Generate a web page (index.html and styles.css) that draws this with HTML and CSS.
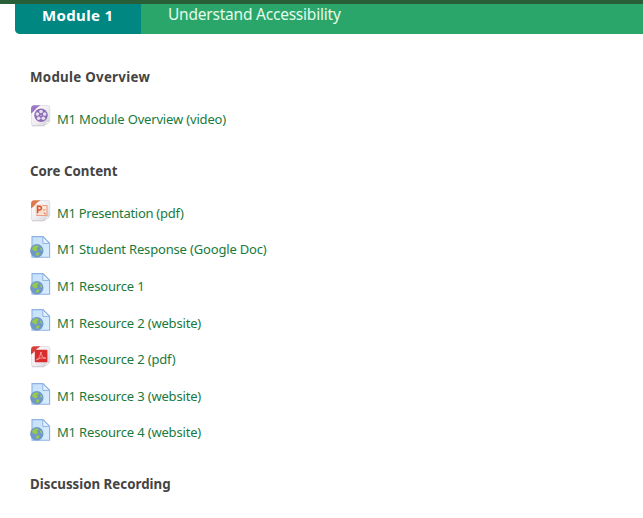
FILE: index.html
```html
<!DOCTYPE html>
<html lang="en">
<head>
<meta charset="utf-8">
<title>Module 1</title>
<link rel="stylesheet" href="styles.css">
</head>
<body>
<svg class="defs" aria-hidden="true">
  <defs>
    <linearGradient id="paper" x2="1" y2="1"><stop stop-color="#fff"/><stop offset=".6" stop-color="#eeebf0"/><stop offset="1" stop-color="#cfcdd2"/></linearGradient>
    <linearGradient id="sheet" x2="1" y2="1"><stop stop-color="#c5e0fa"/><stop offset="1" stop-color="#d8edff"/></linearGradient>
    <symbol id="file" viewBox="0 0 21 22">
      <path d="M8 .5H18Q19.8.5 19.8 2.5V15L14 20.5H3Q1.5 20.5 1.5 19V8Z" fill="url(#paper)" stroke="#dedce2" stroke-width=".8"/>
      <path d="M14 20.5Q15 16 19.8 15.5Q19 18.5 14 20.5Z" fill="#fafafa" stroke="#bfbdc3" stroke-width=".6"/>
      <path d="M2 20.8H14" stroke="#c6c4ca" stroke-width=".8"/>
      <path d="M1 8.5V4Q1 .3 4 .3H10.5Q7 2.5 5 5Q3 7.2 1 8.5Z" fill="currentColor"/>
    </symbol>
    <symbol id="video" viewBox="0 0 21 22">
      <use href="#file"/>
      <circle cx="11" cy="10.3" r="6.7" fill="#8a6db3"/>
      <g fill="#e6def0"><circle cx="11" cy="6.5" r="1.8"/><circle cx="14.6" cy="9.1" r="1.8"/><circle cx="13.3" cy="13.3" r="1.8"/><circle cx="8.7" cy="13.3" r="1.8"/><circle cx="7.4" cy="9.1" r="1.8"/><circle cx="11" cy="10.4" r=".6"/></g>
    </symbol>
    <symbol id="slides" viewBox="0 0 21 22">
      <use href="#file"/>
      <path d="M10 5.5H17V15.5H7V13" fill="#fbe5da" stroke="#e9a17f" stroke-width="1.1"/>
      <path d="M5.5 4.5H12.5V13.5H5.5Z" fill="#f7d8ca"/>
      <path d="M7.6 13V6.2H9.3Q11.4 6.2 11.4 8.1T9.3 10H7.6" fill="none" stroke="#d5532b" stroke-width="1.5"/>
      <path d="M13 10H15.5M14 12.3A2 2 0 0 0 16 14" fill="none" stroke="#e68a68" stroke-width="1.2"/>
    </symbol>
    <symbol id="pdf" viewBox="0 0 21 22">
      <use href="#file"/>
      <rect x="4.8" y="3.8" width="12.6" height="12.4" rx="1" fill="#db2c2c"/>
      <path d="M6.5 14Q10.5 11.5 11 6Q11.2 11.5 15.7 12.2Q10.5 10.8 6.5 14Z" fill="none" stroke="#f5aaa6" stroke-width=".9"/>
    </symbol>
    <symbol id="web" viewBox="0 0 21 22">
      <path d="M2 .6H13L19.6 7.2V21.2H2Z" fill="url(#sheet)" stroke="#8fb2e4" stroke-width="1.1"/>
      <path d="M12.8.8V7.4H19.4Z" fill="#e6f3ff" stroke="#8fb2e4" stroke-width="1"/>
      <circle cx="6.8" cy="14.8" r="6.7" fill="#6f97ca"/>
      <path d="M2.5 11.5Q4.5 9 7.4 9.2L8.8 10.8L6.8 12.2L7.7 14L5.8 15.4L3.5 14.6L2 13.2ZM9.8 11.2L12 12.6L12.3 15L10.6 14.2ZM6.8 16.2L9.6 16.8L8.9 19L6.9 20.2L5.9 18.5Z" fill="#96c94d"/>
    </symbol>
  </defs>
</svg>
<header class="topline"></header>
<div class="tabs">
  <div class="tab">Module 1</div>
  <div class="tab-title">Understand Accessibility</div>
</div>
<main class="content">
  <h2 class="overview">Module Overview</h2>
  <ul>
    <li><svg class="icon purple"><use href="#video"/></svg><a>M1 Module Overview (video)</a></li>
  </ul>
  <h2>Core Content</h2>
  <ul>
    <li><svg class="icon orange"><use href="#slides"/></svg><a class="presentation">M1 Presentation (pdf)</a></li>
    <li><svg class="icon"><use href="#web"/></svg><a>M1 Student Response (Google Doc)</a></li>
    <li><svg class="icon"><use href="#web"/></svg><a>M1 Resource 1</a></li>
    <li><svg class="icon"><use href="#web"/></svg><a>M1 Resource 2 (website)</a></li>
    <li><svg class="icon red"><use href="#pdf"/></svg><a>M1 Resource 2 (pdf)</a></li>
    <li><svg class="icon"><use href="#web"/></svg><a>M1 Resource 3 (website)</a></li>
    <li><svg class="icon"><use href="#web"/></svg><a>M1 Resource 4 (website)</a></li>
  </ul>
  <h2>Discussion Recording</h2>
</main>
</body>
</html>
```
FILE: styles.css
```css
body { margin: 0; background: #fff; font-family: "Noto Sans", "Open Sans", sans-serif; overflow: hidden; }
.defs { display: block; width: 0; height: 0; }
.topline { height: 4px; background: #285f38; }
.tabs { display: flex; height: 30px; margin-left: 15px; background: #2ba66a; border-bottom-left-radius: 5px; overflow: hidden; color: #fff; line-height: 22px; white-space: nowrap; }
.tab { box-sizing: border-box; width: 126px; padding-left: 27px; background: #008782; font-size: 15px; font-weight: 700; letter-spacing: .35px; }
.tab-title { padding-left: 27px; font-size: 15.5px; line-height: 21px; letter-spacing: -.22px; color: #e2fbec; }
.content { padding: 33px 30px 0; }
h2 { margin: 0; height: 20px; line-height: 20px; font-size: 13.3px; font-weight: 700; letter-spacing: 0; color: #444; white-space: nowrap; }
.overview { letter-spacing: .28px; }
ul { list-style: none; margin: 13.4px 0 24.1px; padding: 0; }
ul:last-of-type { margin-bottom: 23.3px; }
li { display: flex; align-items: center; height: 36.6px; gap: 6px; }
.icon { width: 21px; height: 22px; margin-bottom: 4.4px; flex: none; }
.purple { color: #9c78c3; }
.orange { color: #dd794e; }
.red { color: #d8413b; }
a { font-size: 13px; line-height: 20px; letter-spacing: -.17px; color: #187a3d; white-space: nowrap; }
.presentation { letter-spacing: -.28px; }
```
